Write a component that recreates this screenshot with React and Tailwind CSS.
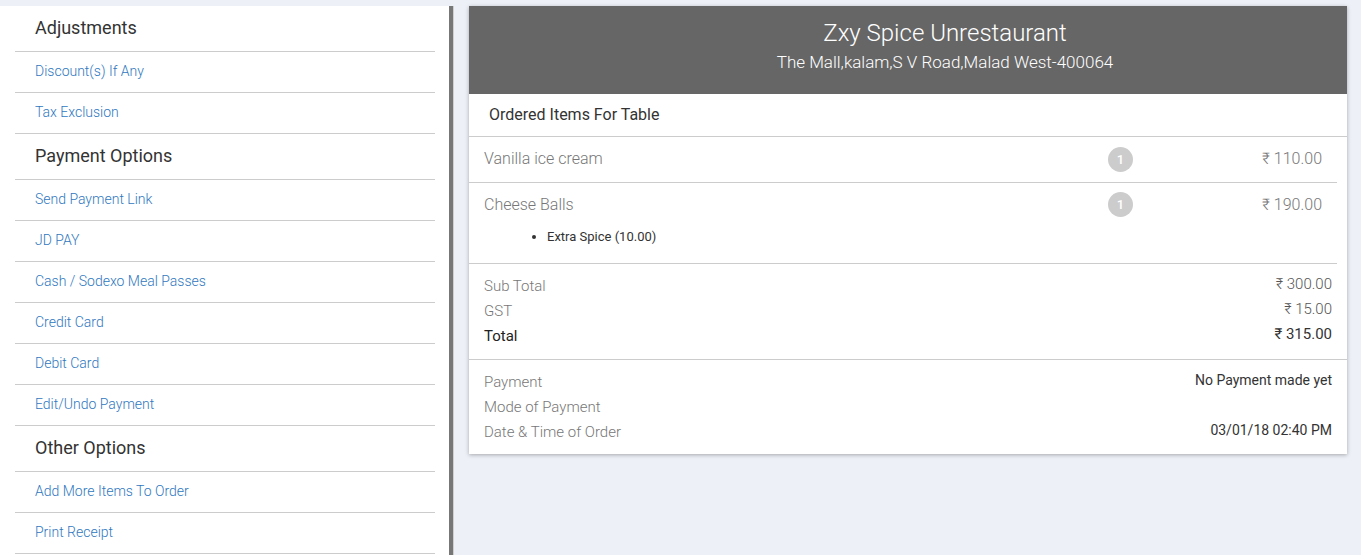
import React from "react";

const sections = [
  { title: "Adjustments", items: ["Discount(s) If Any", "Tax Exclusion"] },
  {
    title: "Payment Options",
    items: [
      "Send Payment Link",
      "JD PAY",
      "Cash / Sodexo Meal Passes",
      "Credit Card",
      "Debit Card",
      "Edit/Undo Payment",
    ],
  },
  { title: "Other Options", items: ["Add More Items To Order", "Print Receipt"] },
];

function Badge() {
  return (
    <div className="w-[25px] h-[25px] rounded-full bg-[#cccccc] text-white text-[13px] font-medium flex items-center justify-center leading-none">
      1
    </div>
  );
}

export default function App() {
  return (
    <div className="h-[555px] overflow-hidden bg-[#edf0f7] pt-[6px] flex font-['Roboto',sans-serif]">
      <aside className="w-[449px] shrink-0 bg-white pl-[15px] pr-[14px] h-[549px] overflow-hidden">
        {sections.map((s) => (
          <div key={s.title}>
            <div className="h-[46px] border-b border-[#cccccc] flex items-center pl-[20px] pb-[2px] text-[18px] text-[#333333]">
              {s.title}
            </div>
            {s.items.map((it) => (
              <div
                key={it}
                className="h-[41px] border-b border-[#cccccc] flex items-center pl-[20px] pb-[2px] text-[14px] font-light text-[#2f78c0]"
              >
                {it}
              </div>
            ))}
          </div>
        ))}
      </aside>
      <div className="w-[5px] shrink-0 bg-[#777777] border-r border-[#cfcfcf] h-[549px]" />
      <div className="ml-[15px] w-[878px] self-start bg-white shadow-[0_1px_4px_rgba(0,0,0,0.3)]">
        <div className="h-[88px] bg-[#666666] text-white text-center pt-[12px] pl-[74px]">
          <div className="text-[24px] font-light leading-[30px]">Zxy Spice Unrestaurant</div>
          <div className="text-[17px] font-light leading-[24px] mt-[2px]">The Mall,kalam,S V Road,Malad West-400064</div>
        </div>
        <div className="h-[43px] border-b border-[#cccccc] flex items-center pl-[20px] text-[16px] text-[#333333]">
          Ordered Items For Table
        </div>
        <div className="mr-[10px] border-b border-[#cccccc]">
          <div className="h-[46px] border-b border-[#cccccc] flex items-center pb-[1px] px-[15px]">
            <div className="flex-1 text-[16px] font-light text-[#777777]">Vanilla ice cream</div>
            <Badge />
            <div className="w-[189px] text-right text-[16px] font-light text-[#777777]">₹ 110.00</div>
          </div>
          <div className="h-[80px] px-[15px] pt-[9px]">
            <div className="flex items-center h-[25px]">
              <div className="flex-1 text-[16px] font-light text-[#777777]">Cheese Balls</div>
              <Badge />
              <div className="w-[189px] text-right text-[16px] font-light text-[#777777]">₹ 190.00</div>
            </div>
            <ul className="list-disc pl-[63px] mt-[11px] text-[13px] text-[#333333] leading-[18px]">
              <li>Extra Spice (10.00)</li>
            </ul>
          </div>
        </div>
        <div className="border-b border-[#cccccc] px-[15px] pt-[10px] pb-[10px] text-[15px] font-light">
          <div className="flex justify-between items-start">
            <span className="leading-[25px] text-[#777777]">Sub Total</span>
            <span className="leading-[21px] text-[#555555]">₹ 300.00</span>
          </div>
          <div className="flex justify-between items-start">
            <span className="leading-[25px] text-[#777777]">GST</span>
            <span className="leading-[21px] text-[#555555]">₹ 15.00</span>
          </div>
          <div className="flex justify-between items-start">
            <span className="leading-[25px] text-[#222222] font-normal">Total</span>
            <span className="leading-[21px] text-[#333333] font-normal">₹ 315.00</span>
          </div>
        </div>
        <div className="px-[15px] pt-[10px] pb-[9px] text-[15px] font-light">
          <div className="flex justify-between items-start">
            <span className="leading-[25px] text-[#777777]">Payment</span>
            <span className="leading-[21px] text-[14px] font-normal text-[#333333]">No Payment made yet</span>
          </div>
          <div className="flex justify-between items-start">
            <span className="leading-[25px] text-[#777777]">Mode of Payment</span>
          </div>
          <div className="flex justify-between items-start">
            <span className="leading-[25px] text-[#777777]">Date &amp; Time of Order</span>
            <span className="leading-[21px] text-[14px] font-normal text-[#333333]">03/01/18 02:40 PM</span>
          </div>
        </div>
      </div>
    </div>
  );
}
